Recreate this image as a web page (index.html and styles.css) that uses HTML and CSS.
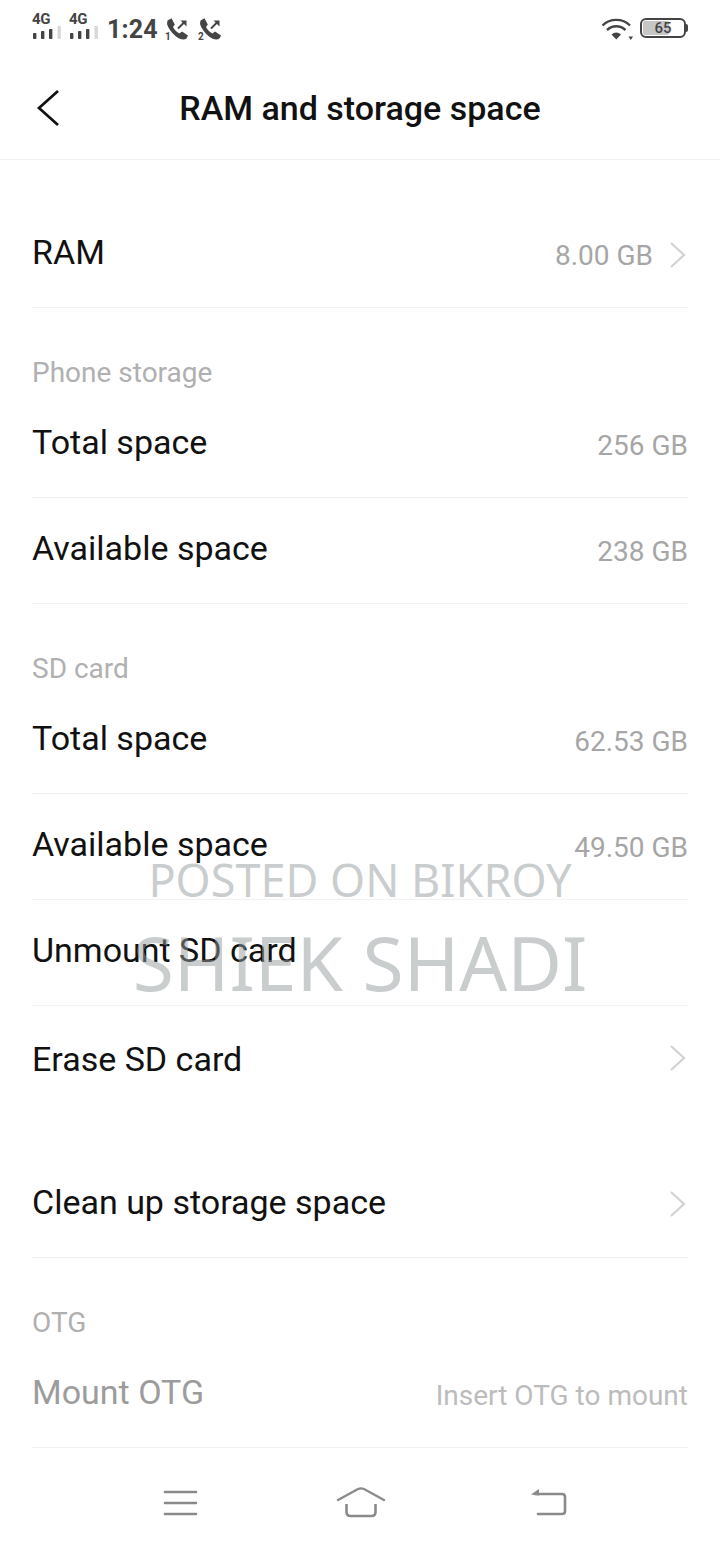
FILE: index.html
```html
<!DOCTYPE html>
<html lang="en">
<head>
<meta charset="utf-8">
<title>RAM and storage space</title>
<link rel="stylesheet" href="styles.css">
</head>
<body>
<div class="screen">
  <div class="status">
    <div class="status-left">
      <div class="signal"><span class="net">4G</span>
        <svg class="bars" width="30" height="14" viewBox="0 0 30 14"><rect x="1" y="8" width="3.400" height="6" rx=".8" fill="#444"/><rect x="9" y="6" width="3.400" height="8" rx=".8" fill="#444"/><rect x="17" y="4" width="3.400" height="10" rx=".8" fill="#444"/><rect x="25.500" y="1" width="3.400" height="13" rx=".8" fill="#d8d8d8"/></svg>
      </div>
      <div class="signal"><span class="net">4G</span>
        <svg class="bars" width="30" height="14" viewBox="0 0 30 14"><rect x="1" y="8" width="3.400" height="6" rx=".8" fill="#444"/><rect x="9" y="6" width="3.400" height="8" rx=".8" fill="#444"/><rect x="17" y="4" width="3.400" height="10" rx=".8" fill="#444"/><rect x="25.500" y="1" width="3.400" height="13" rx=".8" fill="#d8d8d8"/></svg>
      </div>
      <span class="clock">1:24</span>
      <div class="call">
        <svg width="24" height="24" viewBox="0 0 24 24"><path d="M2.500 3.500 6.500 1.200 9.800 7.500 8 10C9.500 13 11.500 15 14.500 16.500L17 14.500 23 18.500 21.500 21.500C19 23.500 15 22.500 11 19.500 6.500 15.500 3 11 2 7Z" fill="#444"/><path d="M13 11.500 19 5.500" fill="none" stroke="#444" stroke-width="2"/><path d="M15.500 3.500H21.500V9.500Z" fill="#444"/></svg>
        <span class="sim">1</span>
      </div>
      <div class="call">
        <svg width="24" height="24" viewBox="0 0 24 24"><path d="M2.500 3.500 6.500 1.200 9.800 7.500 8 10C9.500 13 11.500 15 14.500 16.500L17 14.500 23 18.500 21.500 21.500C19 23.500 15 22.500 11 19.500 6.500 15.500 3 11 2 7Z" fill="#444"/><path d="M13 11.500 19 5.500" fill="none" stroke="#444" stroke-width="2"/><path d="M15.500 3.500H21.500V9.500Z" fill="#444"/></svg>
        <span class="sim">2</span>
      </div>
    </div>
    <div class="status-right">
      <svg class="wifi" width="33" height="24" viewBox="0 0 33 24"><path d="M1.500 8.500C9 1 21.500 1 29 8.500" fill="none" stroke="#444" stroke-width="2.400"/><path d="M6 13C11.500 8 19 8 24.500 13" fill="none" stroke="#444" stroke-width="2.400"/><path d="M10.500 17.500C13.500 14.800 17 14.800 20 17.500L15.300 22.500Z" fill="#444"/><path d="M27.500 19.500H32L29.800 23Z" fill="#444"/></svg>
      <div class="battery">
        <div class="battery-body"><div class="battery-fill"></div><span class="battery-text">65</span></div>
        <div class="battery-tip"></div>
      </div>
    </div>
  </div>

  <header class="titlebar">
    <svg class="back" width="24" height="38" viewBox="0 0 24 38"><path d="M22 2 3 19 22 36" fill="none" stroke="#111" stroke-width="2.700"/></svg>
    <h1 class="title">RAM and storage space</h1>
  </header>

  <main class="content">
    <div class="row"><span class="label">RAM</span><span class="value">8.00 GB</span>
      <svg class="chev chev-ram" width="18" height="28" viewBox="0 0 18 28"><path d="M2 2 15 14 2 26" fill="none" stroke="#d2d2d2" stroke-width="2.200"/></svg></div>

    <div class="section">Phone storage</div>
    <div class="row"><span class="label">Total space</span><span class="value">256 GB</span></div>
    <div class="row"><span class="label">Available space</span><span class="value">238 GB</span></div>

    <div class="section">SD card</div>
    <div class="row"><span class="label">Total space</span><span class="value">62.53 GB</span></div>
    <div class="row"><span class="label">Available space</span><span class="value">49.50 GB</span></div>
    <div class="row"><span class="label">Unmount SD card</span></div>
    <div class="row row-plain"><span class="label">Erase SD card</span>
      <svg class="chev chev-erase" width="18" height="28" viewBox="0 0 18 28"><path d="M2 2 15 14 2 26" fill="none" stroke="#d2d2d2" stroke-width="2.200"/></svg></div>

    <div class="row row-clean"><span class="label">Clean up storage space</span>
      <svg class="chev" width="18" height="28" viewBox="0 0 18 28"><path d="M2 2 15 14 2 26" fill="none" stroke="#d2d2d2" stroke-width="2.200"/></svg></div>

    <div class="section">OTG</div>
    <div class="row"><span class="label label-muted">Mount OTG</span><span class="value value-light">Insert OTG to mount</span></div>
  </main>

  <nav class="navbar">
    <svg width="36" height="30" viewBox="0 0 36 30"><path d="M3 4H34M3 15H34M3 26H34" fill="none" stroke="#8a8a8a" stroke-width="2.600" stroke-linecap="round"/></svg>
    <svg class="nav-home" width="50" height="32" viewBox="0 0 50 32"><path d="M2 13 22 2Q25 .8 28 2L48 13" fill="none" stroke="#8a8a8a" stroke-width="2.400" stroke-linecap="round"/><path d="M10.500 17V25Q10.500 29 14.500 29H35.500Q39.500 29 39.500 25V17" fill="none" stroke="#8a8a8a" stroke-width="2.600"/></svg>
    <svg class="nav-back" width="36" height="30" viewBox="0 0 36 30"><path d="M4 6H31Q34 6 34 9V23Q34 26 31 26H7" fill="none" stroke="#8a8a8a" stroke-width="2.600" stroke-linecap="round"/><path d="M0 6.500 8 1V7.500Z" fill="#8a8a8a"/></svg>
  </nav>

  <div class="watermark">
    <div class="wm-small">POSTED ON BIKROY</div>
    <div class="wm-large">SHIEK SHADI</div>
  </div>
</div>
</body>
</html>
```

FILE: styles.css
```css
* { box-sizing: border-box; }
html, body { margin: 0; padding: 0; background: #fff; }
body { font-family: Roboto, "Noto Sans", sans-serif; }
.screen { position: relative; width: 720px; height: 1544px; overflow: hidden; background: #fff; }

.status { height: 58px; display: flex; justify-content: space-between; align-items: center; padding: 0 32px 2px 32px; color: #444; }
.status-left, .status-right { display: flex; align-items: center; }
.signal { display: flex; flex-direction: column; align-items: flex-start; width: 37px; margin-top: -4px; }
.net { font-size: 15px; font-weight: 700; line-height: 13px; letter-spacing: -.4px; color: #444; }
.bars { display: block; margin-top: -1px; }
.clock { font-size: 25px; font-weight: 700; color: #444; line-height: 30px; margin-left: 1px; margin-right: 7px; letter-spacing: .2px; margin-top: 4px; }
.call { position: relative; width: 24px; height: 24px; margin-right: 9px; margin-top: 2px; }
.call svg { display: block; }
.sim { position: absolute; left: 0; bottom: -1px; font-size: 10px; line-height: 10px; font-weight: 700; color: #444; }
.status-right { gap: 6px; }
.wifi { margin-top: 2px; }
.battery { display: flex; align-items: center; }
.battery-body { position: relative; width: 46px; height: 20px; border: 2px solid #444; border-radius: 6px; padding: 1px; }
.battery-fill { width: 65%; height: 100%; background: #c6c6c6; border-radius: 2px; }
.battery-text { position: absolute; inset: 0; text-align: center; font-size: 15px; font-weight: 500; line-height: 16px; color: #444; }
.battery-tip { width: 2px; height: 8px; background: #444; border-radius: 0 2px 2px 0; }

.titlebar { height: 102px; position: relative; display: flex; align-items: center; justify-content: center; border-bottom: 1px solid #f2f2f2; padding-bottom: 2px; }
.back { position: absolute; left: 36px; top: 31px; }
.title { margin: 0; font-size: 34px; font-weight: 500; color: #111; line-height: 40px; }

.content { padding: 42px 32px 0; }
.row { height: 106px; display: flex; align-items: center; border-bottom: 1px solid #f2f2f2; padding-bottom: 6px; }
.row-plain { border-bottom: none; padding-bottom: 0; }
.row-clean { margin-top: 40px; }
.label { flex: 1; font-size: 34px; color: #111; line-height: 40px; }
.label-muted { color: #9c9c9c; }
.value { font-size: 28px; color: #a6a6a6; line-height: 36px; margin-top: 9px; }
.value-light { color: #bcbcbc; }
.chev { margin-left: 16px; margin-right: 1px; margin-top: 4px; }
.chev-ram { margin-top: 6px; }
.chev-erase { margin-top: -2px; }
.section { height: 84px; display: flex; align-items: flex-start; padding-top: 47px; font-size: 28px; line-height: 36px; color: #b0b0b0; }

.navbar { position: absolute; left: 0; right: 0; bottom: 0; height: 97px; padding: 14px 0 0 162px; display: flex; align-items: center; }
.nav-home { margin-left: 138px; }
.nav-back { margin-left: 145px; }

.watermark { position: absolute; left: 0; right: 0; top: 848px; text-align: center; font-family: "Noto Sans", "Open Sans", sans-serif; color: rgba(150, 155, 158, .5); pointer-events: none; }
.wm-small { font-size: 45px; line-height: 64px; }
.wm-large { font-size: 75px; line-height: 100px; }
```
